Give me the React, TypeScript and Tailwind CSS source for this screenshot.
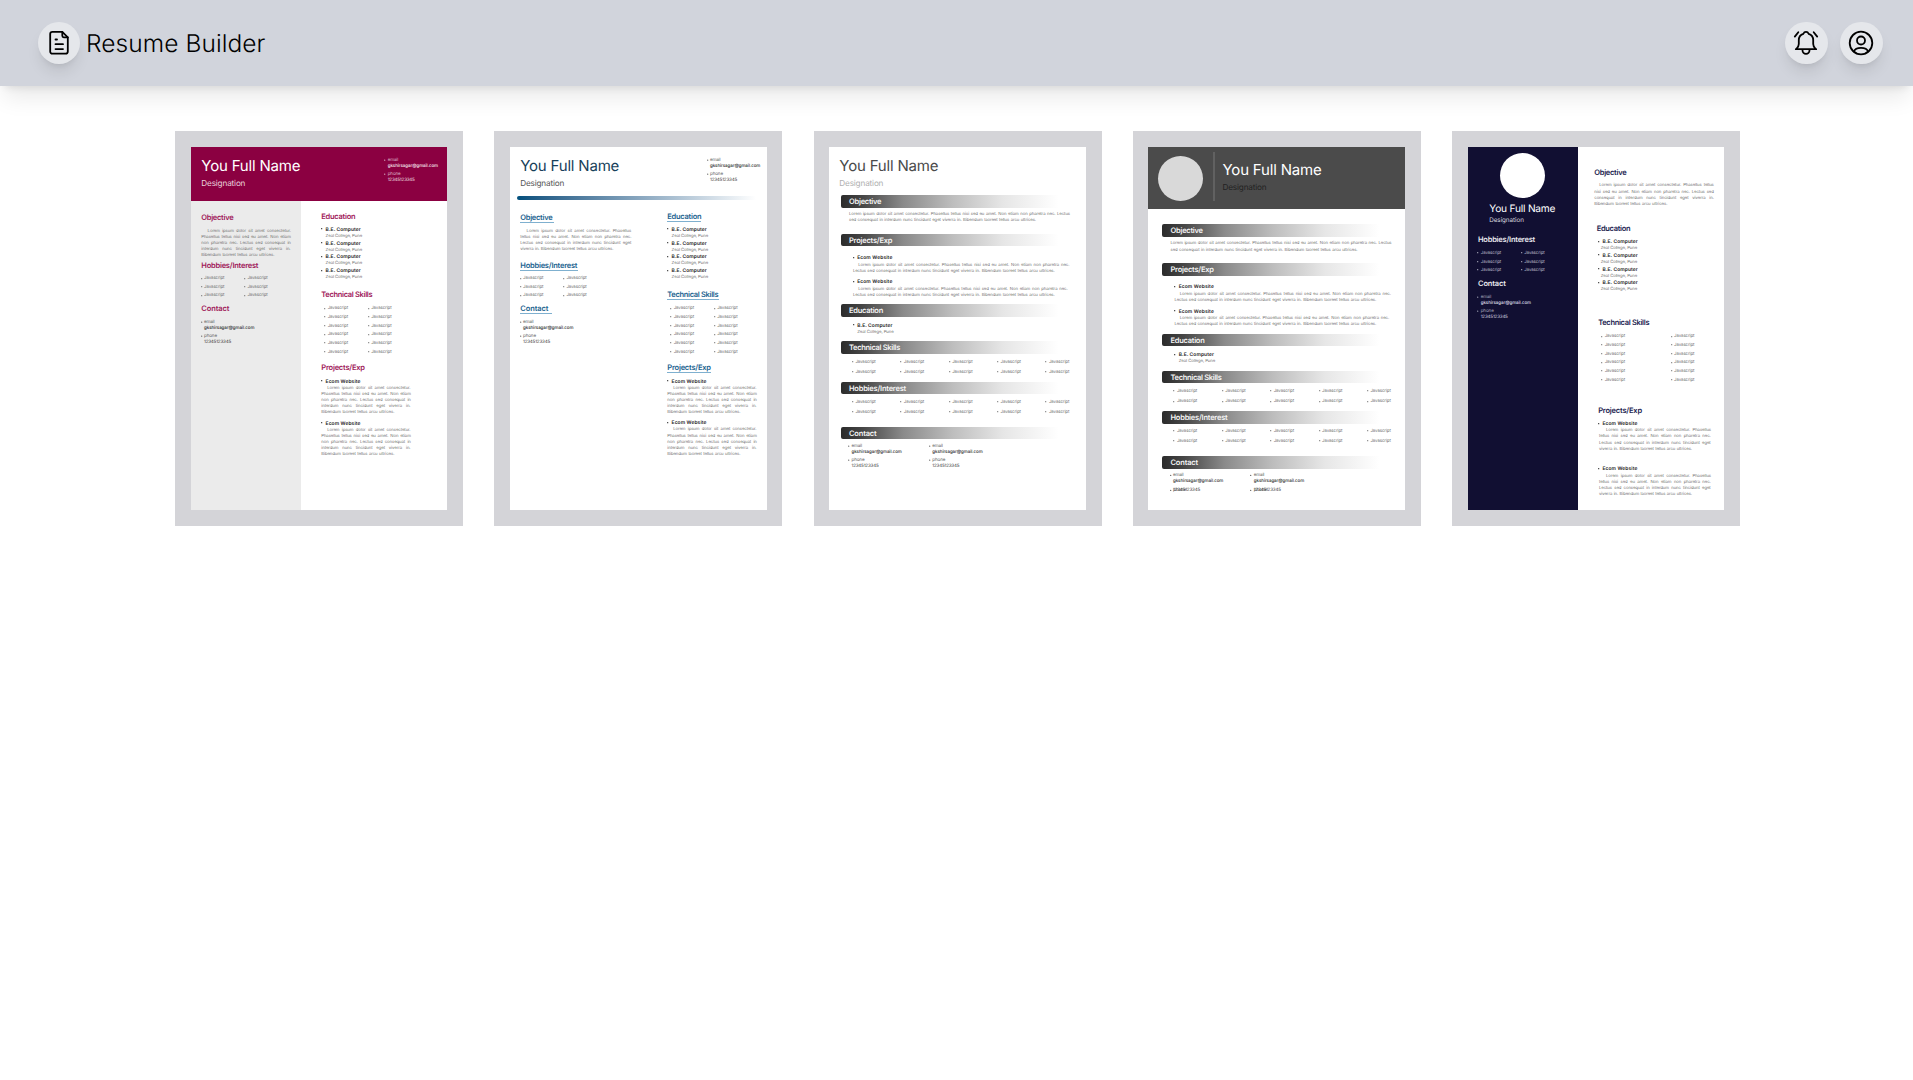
import React, { useLayoutEffect, useRef, useState } from "react";

/** Text set on one line and spaced out to an exact width. */
function Fit({ w, words = false, className = "", children }: { w: number; words?: boolean; className?: string; children: string }) {
  const ref = useRef<HTMLSpanElement>(null);
  const [space, setSpace] = useState(0);
  useLayoutEffect(() => {
    if (!ref.current) return;
    const natural = ref.current.getBoundingClientRect().width;
    const slots = words ? children.split(" ").length - 1 : children.length;
    setSpace((w - natural) / Math.max(slots, 1));
  }, [w, words, children]);
  return (
    <span
      ref={ref}
      className={"block w-max whitespace-nowrap " + className}
      style={words ? { wordSpacing: space } : { letterSpacing: space }}
    >
      {children}
    </span>
  );
}

function Heading({ w, className = "", line = "", children }: { w: number; className?: string; line?: string; children: string }) {
  return (
    <div className={"h-[10px] w-max text-[7.5px] leading-[10px] font-semibold " + className}>
      <Fit w={w} className="translate-y-[0.2px]">{children}</Fit>
      {line && <div className={"-mt-px h-px bg-[#7fb0cf] " + line} />}
    </div>
  );
}

const Dot = () => (
  <svg className="block h-[2px] w-[1.2px] shrink-0 overflow-visible" viewBox="0 0 1.2 2">
    <circle cx="0.7" cy="0.7" r="0.65" fill="currentColor" />
  </svg>
);

type Ln = [string, number];

function Para({ lines, indent, className = "" }: { lines: Ln[]; indent: string; className?: string }) {
  return (
    <div className={"text-[4.25px] leading-[6.06px] text-[#6f6f6f] " + className}>
      {lines.map(([t, w], i) => (
        <Fit key={i} w={w} words className={"translate-y-[0.9px] tracking-[-0.08px] " + (i === 0 ? indent : "")}>
          {t}
        </Fit>
      ))}
    </div>
  );
}

function Skills({ cols, rows, gap, pitch, className = "" }: { cols: number; rows: number; gap: string; pitch: string; className?: string }) {
  return (
    <div className={"text-[4.4px] text-[#777] " + className}>
      {Array.from({ length: rows }, (_, r) => (
        <div key={r} className={"flex items-center " + pitch}>
          {Array.from({ length: cols }, (_, c) => (
            <div key={c} className={"flex shrink-0 items-center gap-[2.3px] " + gap}>
              <Dot />
              <Fit w={20.3} className="translate-y-[0.9px]">Javascript</Fit>
            </div>
          ))}
        </div>
      ))}
    </div>
  );
}

function Contact({ className = "", strong = "text-[#333]" }: { className?: string; strong?: string }) {
  return (
    <div className={"translate-y-[0.5px] text-[4.5px] leading-[6px] " + className}>
      <div className="flex h-[6px] items-center gap-[2.2px]">
        <Dot />
        <Fit w={10.5}>email</Fit>
      </div>
      <div className={"ml-[3.4px] h-[6px] " + strong}>
        <Fit w={50.3} className="font-medium">gkshirsagar@gmail.com</Fit>
      </div>
      <div className="mt-[2.2px] flex h-[6px] items-center gap-[2.2px]">
        <Dot />
        <Fit w={13}>phone</Fit>
      </div>
      <div className={"ml-[3.4px] h-[6px] " + strong}>
        <Fit w={27}>12345123345</Fit>
      </div>
    </div>
  );
}

function Bullet({ w, children }: { w: number; children: string }) {
  return (
    <div className="flex h-[7px] items-center gap-[3.1px] text-[4.9px] leading-[7px] font-semibold text-[#222]">
      <Dot />
      <Fit w={w} className="translate-y-[0.6px]">{children}</Fit>
    </div>
  );
}

function Degree({ shift = "ml-[4.3px]" }: { shift?: string }) {
  return (
    <div className="h-[13.8px]">
      <Bullet w={35.3}>B.E. Computer</Bullet>
      <Fit w={36.5} className={"translate-y-[0.9px] text-[4.3px] leading-[6px] text-[#6f6f6f] " + shift}>Zeal College, Pune</Fit>
    </div>
  );
}

const NARROW: Ln[] = [
  ["Lorem ipsum dolor sit amet consectetur.", 83.3],
  ["Phasellus tellus nisi sed eu amet. Non etiam", 89.5],
  ["non pharetra nec. Lectus sed consequat in", 89.5],
  ["interdum nunc tincidunt eget viverra in.", 89.2],
  ["Bibendum laoreet tellus arcu ultrices.", 73],
];

const MEDIUM: Ln[] = [
  ["Lorem ipsum dolor sit amet consectetur. Phasellus", 104.5],
  ["tellus nisi sed eu amet. Non etiam non pharetra nec.", 111],
  ["Lectus sed consequat in interdum nunc tincidunt eget", 111],
  ["viverra in. Bibendum laoreet tellus arcu ultrices.", 93],
];

const WIDE: Ln[] = [
  ["Lorem ipsum dolor sit amet consectetur. Phasellus tellus", 114.5],
  ["nisi sed eu amet. Non etiam non pharetra nec. Lectus sed", 119.5],
  ["consequat in interdum nunc tincidunt eget viverra in.", 119.5],
  ["Bibendum laoreet tellus arcu ultrices.", 73],
];

function SideSections({ accent, lines, underline = false }: { accent: string; lines: Ln[]; underline?: boolean }) {
  return (
    <>
      <Heading w={32} className={"mt-[11.8px] " + accent} line={underline ? "w-[34px]" : ""}>Objective</Heading>
      <Para lines={lines} indent="ml-[6.3px]" className="mt-[5px] h-[30.3px]" />
      <Heading w={57} className={"mt-[2.2px] " + accent} line={underline ? "w-[57.5px]" : ""}>Hobbies/Interest</Heading>
      <Skills cols={2} rows={3} gap="w-[43.3px]" pitch="h-[8.6px]" className="mt-[3.7px] -ml-[0.7px]" />
      <Heading w={28} className={"mt-[4.2px] " + accent} line={underline ? "w-[32px]" : ""}>Contact</Heading>
      <Contact className="mt-[5px] -ml-[0.7px] text-[#666]" />
    </>
  );
}

function MainSections({ accent, underline = false }: { accent: string; underline?: boolean }) {
  return (
    <>
      <Heading w={34} className={"mt-[10.3px] " + accent} line={underline ? "w-[34px]" : ""}>Education</Heading>
      <div className="mt-[4.3px]">
        {[0, 1, 2, 3].map((i) => <Degree key={i} />)}
      </div>
      <Heading w={51} className={"mt-[8.5px] " + accent} line={underline ? "w-[51.5px]" : ""}>Technical Skills</Heading>
      <Skills cols={2} rows={6} gap="w-[43.5px]" pitch="h-[8.65px]" className="mt-[4.8px] ml-[2.9px]" />
      <Heading w={43.5} className={"mt-[7.2px] " + accent} line={underline ? "w-[43.5px]" : ""}>Projects/Exp</Heading>
      {[0, 1].map((i) => (
        <div key={i} className="mt-[4.4px]">
          <Bullet w={35}>Ecom Website</Bullet>
          <Para lines={NARROW} indent="ml-[5.9px]" />
        </div>
      ))}
    </>
  );
}

function Name({ className = "", role = "" }: { className?: string; role?: string }) {
  return (
    <div className={className}>
      <Fit w={99} className="text-[15px] leading-[20px]">You Full Name</Fit>
      <Fit w={44} className={"mt-[2px] text-[8.2px] leading-[10px] " + role}>Designation</Fit>
    </div>
  );
}

function Maroon() {
  return (
    <>
      <div className="flex h-[54.3px] shrink-0 bg-[#8b0041] text-white">
        <Name className="ml-[10.3px] w-[183px] shrink-0 pt-[8.7px]" role="text-[#e9cfdb]" />
        <Contact className="pt-[9.5px] text-[#dbb0c4]" strong="text-[#f3e3ea]" />
      </div>
      <div className="flex grow">
        <div className="w-[110px] shrink-0 bg-[#ebebeb] pl-[10.3px]">
          <SideSections accent="text-[#a0195a]" lines={NARROW} />
        </div>
        <div className="pl-[20.3px]">
          <MainSections accent="text-[#a0195a]" />
        </div>
      </div>
    </>
  );
}

function Blue() {
  return (
    <>
      <div className="flex h-[49px] shrink-0">
        <Name className="ml-[10.2px] w-[186.4px] shrink-0 pt-[8.7px] text-[#173f5a]" role="text-[#555]" />
        <Contact className="pt-[9.5px] text-[#666]" />
      </div>
      <div className="ml-[6.5px] h-[4.4px] w-[239px] shrink-0 rounded-l-full bg-linear-to-r from-[#004f7c] to-white" />
      <div className="flex grow pt-[0.9px]">
        <div className="w-[147px] shrink-0 pl-[10.3px]">
          <SideSections accent="text-[#1d6490]" lines={MEDIUM} underline />
        </div>
        <div className="pl-[10.3px]">
          <MainSections accent="text-[#1d6490]" underline />
        </div>
      </div>
    </>
  );
}

function Bar({ w, className = "", children }: { w: number; className?: string; children: string }) {
  return (
    <div
      className={
        "h-[12.8px] w-[222px] rounded-l-[2px] bg-[linear-gradient(90deg,#2b2b2b_0%,#474747_10%,#8a8a8a_28%,#bdbdbd_50%,#e6e6e6_73%,#ffffff_98%)] pl-[8.5px] text-[7.5px] leading-[12.8px] font-semibold text-[#f4f4f4] " +
        className
      }
    >
      <Fit w={w} className="translate-y-[0.5px]">{children}</Fit>
    </div>
  );
}

function Ribbons({ crowded = false }: { crowded?: boolean }) {
  return (
    <div className="w-[235px]">
      <Bar w={32.3}>Objective</Bar>
      <Para
        className="mt-[3.4px] ml-[8.5px]"
        indent=""
        lines={[
          ["Lorem ipsum dolor sit amet consectetur. Phasellus tellus nisi sed eu amet. Non etiam non pharetra nec. Lectus", 221],
          ["sed consequat in interdum nunc tincidunt eget viverra in. Bibendum laoreet tellus arcu ultrices.", 187],
        ]}
      />
      <Bar w={43.3} className="mt-[10.3px]">Projects/Exp</Bar>
      <div className="mt-[7.6px] ml-[12.4px]">
        {[211, 209.3].map((w) => (
          <div key={w} className="h-[24.3px]">
            <Bullet w={35.3}>Ecom Website</Bullet>
            <Para
              indent="ml-[5.4px]"
              className="mt-[0.6px]"
              lines={[
                ["Lorem ipsum dolor sit amet consectetur. Phasellus tellus nisi sed eu amet. Non etiam non pharetra nec.", w],
                ["Lectus sed consequat in interdum nunc tincidunt eget viverra in. Bibendum laoreet tellus arcu ultrices.", 201.7],
              ]}
            />
          </div>
        ))}
      </div>
      <Bar w={34} className="mt-[1.8px]">Education</Bar>
      <div className="mt-[4.8px] ml-[12.4px]">
        <Degree />
      </div>
      <Bar w={51} className="mt-[5.6px]">Technical Skills</Bar>
      <Skills cols={5} rows={2} gap="w-[48.4px]" pitch="h-[10.2px]" className="mt-[2.9px] ml-[11.4px]" />
      <Bar w={57} className="mt-[4.2px]">Hobbies/Interest</Bar>
      <Skills cols={5} rows={2} gap="w-[48.4px]" pitch="h-[10.4px]" className="mt-[2.2px] ml-[11.4px]" />
      <Bar w={27.5} className="mt-[9.3px]">Contact</Bar>
      <div className="mt-[3.5px] ml-[7.6px] flex">
        {[0, 1].map((i) =>
          crowded ? (
            <div key={i} className="w-[80.8px] translate-y-[0.7px] text-[4.5px] leading-[6px] text-[#666]">
              <div className="flex items-center gap-[2.2px]">
                <Dot />
                <Fit w={10.5}>email</Fit>
              </div>
              <Fit w={50.3} className="ml-[3.4px] font-medium text-[#333]">gkshirsagar@gmail.com</Fit>
              <div className="mt-[2.4px] flex items-center gap-[2.2px]">
                <Dot />
                <div className="grid">
                  <Fit w={13} className="col-start-1 row-start-1">phone</Fit>
                  <Fit w={27} className="col-start-1 row-start-1 text-[#333]">12345123345</Fit>
                </div>
              </div>
            </div>
          ) : (
            <Contact key={i} className="w-[80.8px] text-[#666]" />
          ),
        )}
      </div>
    </div>
  );
}

function Plain() {
  return (
    <>
      <Name className="ml-[10.3px] h-[48px] shrink-0 pt-[8.7px] text-[#4a4a4a]" role="text-[#b0b0b0]" />
      <div className="ml-[11.5px]">
        <Ribbons />
      </div>
    </>
  );
}

function Portrait() {
  return (
    <>
      <div className="flex h-[62px] shrink-0 bg-[#4b4b4b] text-white">
        <div className="mt-[8.8px] ml-[10px] size-[45px] rounded-full bg-[#d9d9d9]" />
        <div className="mt-[4.7px] ml-[10px] h-[49px] w-[1.5px] bg-[#616161]" />
        <Name className="ml-[8px] pt-[12.7px]" role="text-[#222]" />
      </div>
      <div className="mt-[15.3px] ml-[14px]">
        <Ribbons crowded />
      </div>
    </>
  );
}

function Navy() {
  const accent = "text-[#231d4f]";
  return (
    <div className="flex grow">
      <div className="w-[110px] shrink-0 bg-[#110f32] pl-[10px] text-white">
        <div className="mt-[5.7px] ml-[22.3px] size-[45px] rounded-full bg-white" />
        <div className="mt-[4px] ml-[11.3px]">
          <Fit w={66} className="text-[10.2px] leading-[14px]">You Full Name</Fit>
          <Fit w={34.5} className="text-[6.3px] leading-[9px] text-[#d6d6de]">Designation</Fit>
        </div>
        <Heading w={57} className="mt-[10.2px] text-[#e8e8ee]">Hobbies/Interest</Heading>
        <Skills cols={2} rows={3} gap="w-[43.5px]" pitch="h-[8.65px]" className="mt-[4px] -ml-[0.7px] text-[#b3b3c2]!" />
        <Heading w={27.7} className="mt-[3.9px] text-[#e8e8ee]">Contact</Heading>
        <Contact className="mt-[5.2px] -ml-[0.7px] text-[#a5a5b8]" strong="text-[#dcdce6]" />
      </div>
      <div className="pl-[16.3px]">
        <Heading w={32} className={"mt-[20.9px] " + accent}>Objective</Heading>
        <Para lines={WIDE} indent="ml-[5px]" className="mt-[4.6px]" />
        <div className="ml-[2.4px]">
          <Heading w={33.5} className={"mt-[17.1px] " + accent}>Education</Heading>
          <div className="mt-[4.2px] ml-[1.6px]">
            {[0, 1, 2, 3].map((i) => <Degree key={i} shift="ml-[2.4px]" />)}
          </div>
        </div>
        <div className="ml-[3.9px]">
          <Heading w={51} className={"mt-[24.7px] " + accent}>Technical Skills</Heading>
          <Skills cols={2} rows={6} gap="w-[69.4px]" pitch="h-[8.65px]" className="mt-[4.5px] ml-[3px]" />
          <Heading w={43.7} className={"mt-[21.4px] " + accent}>Projects/Exp</Heading>
          {[0, 1].map((i) => (
            <div key={i} className={i ? "mt-[13.8px]" : "mt-[4.5px]"}>
              <Bullet w={35}>Ecom Website</Bullet>
              <Para
                indent="ml-[7px]"
                className="mt-[0.3px] ml-[0.8px]"
                lines={[
                  ["Lorem ipsum dolor sit amet consectetur. Phasellus", 105],
                  ["tellus nisi sed eu amet. Non etiam non pharetra nec.", 111.7],
                  ["Lectus sed consequat in interdum nunc tincidunt eget", 111.7],
                  ["viverra in. Bibendum laoreet tellus arcu ultrices.", 93],
                ]}
              />
            </div>
          ))}
        </div>
      </div>
    </div>
  );
}

function Round({ children }: { children: React.ReactNode }) {
  return <div className="flex h-[42px] w-[42.5px] items-center justify-center rounded-full bg-gray-200 shadow-lg">{children}</div>;
}

const stroke = { fill: "none", stroke: "#000", strokeWidth: 1.8, strokeLinecap: "round", strokeLinejoin: "round" } as const;

export default function App() {
  const papers = [
    { Paper: Maroon, size: "w-[256px]" },
    { Paper: Blue, size: "-ml-[0.25px] w-[257px]" },
    { Paper: Plain, size: "-ml-[0.5px] w-[257px]" },
    { Paper: Portrait, size: "-ml-[0.75px] w-[257px]" },
    { Paper: Navy, size: "w-[256px]" },
  ];
  return (
    <div className="min-h-screen bg-white font-[Inter,sans-serif] [text-rendering:geometricPrecision]">
      <header className="flex h-[86px] items-center justify-between bg-[#d1d4dc] pr-[30.5px] pl-[37.5px] shadow-[0_15px_22px_-4px_rgb(0_0_0/0.09),0_6px_8px_-5px_rgb(0_0_0/0.1)]">
        <div className="flex items-center gap-[6px]">
          <Round>
            <svg width="26" height="26" viewBox="0 0 26 26" {...stroke}>
              <path d="M16.3 1.9H6.4a2.2 2.2 0 0 0-2.2 2.2v17.4a2.2 2.2 0 0 0 2.2 2.2h13.2a2.2 2.2 0 0 0 2.2-2.2V7.3z" />
              <path d="M16.3 1.9v3.9a1.5 1.5 0 0 0 1.5 1.5h4M9.5 9.5h1.5M9.5 14.2h7.5M9.5 19.1h7.5" />
            </svg>
          </Round>
          <Fit w={179.5} className="text-[24.5px] leading-8 font-light text-black">Resume Builder</Fit>
        </div>
        <div className="flex items-center gap-[12.5px]">
          <Round>
            <svg width="26" height="26" viewBox="0 0 26 26" {...stroke}>
              <path d="M2.8 19.2h20.4M3.2 19.1c1.7-1.3 2.6-2.8 2.6-5V10c0-3 1.7-5.3 4.6-6.2.5-1.3 1.4-1.9 2.6-1.9s2.1.6 2.6 1.9c2.9.9 4.6 3.2 4.6 6.2v4.1c0 2.2.9 3.7 2.6 5M9.5 19.4v.9a3.5 3.5 0 0 0 7 0v-.9M5.3 2.2 1.8 6.6M20.7 2.2l3.5 4.4" />
            </svg>
          </Round>
          <Round>
            <svg width="26" height="26" viewBox="0 0 26 26" {...stroke}>
              <circle cx="13" cy="13" r="11.3" />
              <circle cx="13" cy="10.5" r="4" />
              <path d="M5.8 21.5c1-2.6 3.7-3.7 7.2-3.7s6.2 1.1 7.2 3.7" />
            </svg>
          </Round>
        </div>
      </header>
      <main className="flex justify-between pt-[45px] pr-[173px] pl-[175px]">
        {papers.map(({ Paper, size }, i) => (
          <div key={i} className="h-[395px] w-[288px] bg-zinc-300 p-4">
            <div className={"flex h-[363px] flex-col overflow-hidden bg-white " + size}>
              <Paper />
            </div>
          </div>
        ))}
      </main>
    </div>
  );
}
